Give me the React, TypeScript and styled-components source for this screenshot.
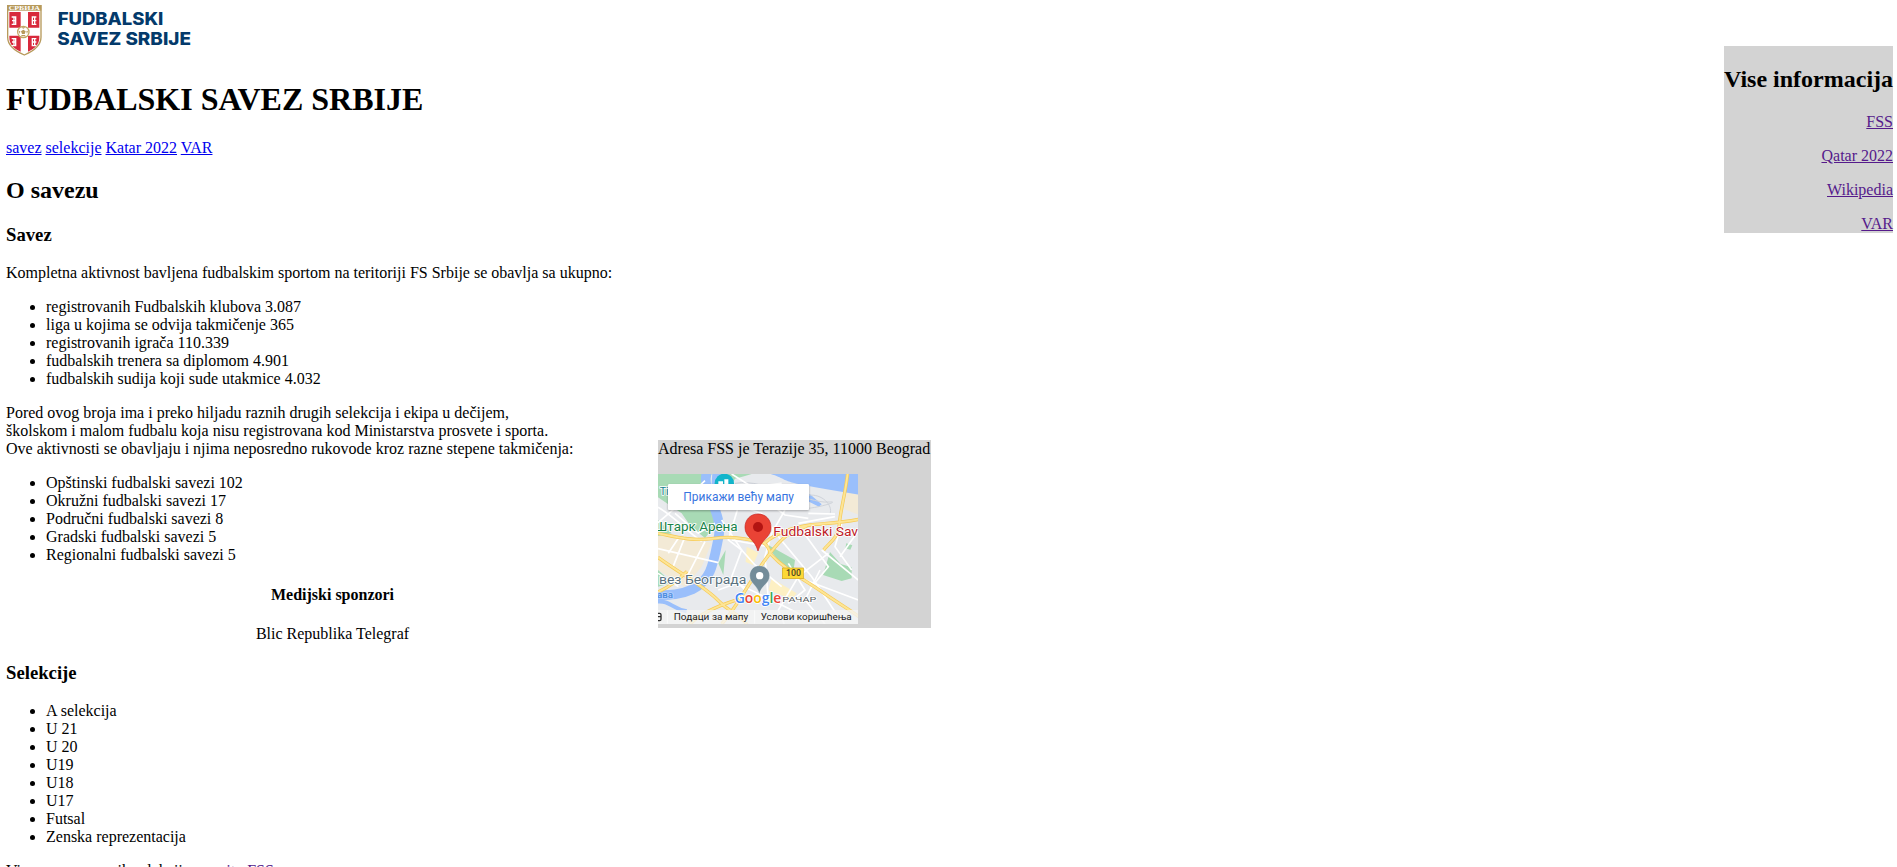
import React from "react";
import styled, { createGlobalStyle } from "styled-components";

const GlobalStyle = createGlobalStyle`
  html, body { margin: 0; height: 100%; overflow: hidden; background: #fff; }
  body {
    font-family: "Liberation Serif", "Times New Roman", serif;
    font-size: 16px;
    line-height: 18px;
    color: #000;
  }
`;

const Page = styled.div`
  display: flex;
  align-items: flex-start;
  height: 867px;
  padding: 5px 4px 0 6px;
  box-sizing: border-box;
  overflow: hidden;
`;

const Content = styled.main`
  width: 653px;
  margin-right: -1px;
  flex: none;
`;

const LogoRow = styled.header`
  height: 55px;
`;

const Logo = styled.svg`
  display: block;
`;

const Title = styled.h1`
  margin: 21px 0;
  font-size: 32px;
  line-height: 37px;
`;

const SectionTitle = styled.h2`
  margin: 19.92px 0;
  font-size: 24px;
  line-height: 27px;
`;

const SubTitle = styled.h3`
  margin: 18.72px 0;
  font-size: 18.72px;
  line-height: 21px;
`;

const Sponsors = styled.section`
  text-align: center;
`;

const SponsorsTitle = styled.h4`
  margin: 22.28px 0 21.28px;
  font-size: 16px;
`;

const Text = styled.p`
  margin: 16px 0;
`;

const List = styled.ul`
  margin: 16px 0;
  padding-left: 40px;
`;

const Link = styled.a<{ $visited?: boolean }>`
  color: ${(p) => (p.$visited ? "#551a8b" : "#0000ee")};
  text-decoration: underline;
`;

const Address = styled.aside`
  flex: none;
  width: 273px;
  height: 188px;
  margin-top: 435px;
  background: lightgray;
  white-space: nowrap;
`;

const AddressText = styled.p`
  margin: 0 0 16px;
`;

const MapView = styled.svg`
  display: block;
  overflow: hidden;
`;

const MoreInfo = styled.aside`
  flex: none;
  width: 169px;
  height: 187px;
  margin: 41px 0 0 auto;
  background: lightgray;
  text-align: right;
  display: flow-root;
  white-space: nowrap;
`;

const nav = ["savez", "selekcije", "Katar 2022", "VAR"];
const stats = [
  "registrovanih Fudbalskih klubova 3.087",
  "liga u kojima se odvija takmičenje 365",
  "registrovanih igrača 110.339",
  "fudbalskih trenera sa diplomom 4.901",
  "fudbalskih sudija koji sude utakmice 4.032",
];
const unions = [
  "Opštinski fudbalski savezi 102",
  "Okružni fudbalski savezi 17",
  "Područni fudbalski savezi 8",
  "Gradski fudbalski savezi 5",
  "Regionalni fudbalski savezi 5",
];
const teams = ["A selekcija", "U 21", "U 20", "U19", "U18", "U17", "Futsal", "Zenska reprezentacija"];
const more = ["FSS", "Qatar 2022", "Wikipedia", "VAR"];

const Items = ({ items }: { items: string[] }) => (
  <List>
    {items.map((t) => (
      <li key={t}>{t}</li>
    ))}
  </List>
);

const BrandLogo = () => (
  <Logo width="190" height="52" viewBox="18 15 570 156">
    <path d="M23 17H123V112C123 140 97 155 73 165C49 155 23 140 23 112Z" fill="#fff" stroke="#b79a5b" strokeWidth="4" />
    <rect x="22" y="15" width="102" height="17" fill="#b79a5b" />
    <text x="26" y="30" fontFamily="Liberation Serif" fontWeight="700" fontSize="20" fill="#fff" textLength="94" lengthAdjust="spacingAndGlyphs">СРБИЈА</text>
    <path d="M28 36H62V83H28ZM84 36H118V83H84ZM28 107H62V155C42 146 28 135 28 112ZM84 107H118V112C118 135 104 146 84 155Z" fill="#d8293c" />
    <g fill="none" stroke="#fff" strokeWidth="4">
      <path d="M35 51H47V73H35M36 62H46M42 52V72M109 51H97V73H109M109 62H98M104 52V72" />
      <path d="M35 116H47V137H35M36 126H46M42 117V136M109 116H97V137H109M109 126H98M104 117V136" />
    </g>
    <circle cx="70" cy="96" r="19" fill="#c4a765" />
    <circle cx="70" cy="96" r="15" fill="#fff" />
    <path d="M70 89l7 5-3 8h-8l-3-8zM63 82h14l-7 4zM56 92l5 2-2 8zM84 92l-5 2 2 8zM63 109l2-4h10l2 4z" fill="#b79a5b" />
    <g fontFamily="Inter, sans-serif" fontWeight="800" fontSize="52" fill="#043a6b">
      <text x="173" y="75" textLength="317" lengthAdjust="spacingAndGlyphs">FUDBALSKI</text>
      <text x="172" y="135" textLength="401" lengthAdjust="spacingAndGlyphs">SAVEZ SRBIJE</text>
    </g>
  </Logo>
);

const majorRoads = [
  "M9 190C60 200 110 214 170 206S250 203 330 218",
  "M330 218C370 184 430 170 465 165S550 160 612 148",
  "M9 262C90 320 150 350 190 392S250 425 280 470",
  "M200 462C250 408 290 320 345 250S410 190 455 168",
  "M345 250C390 300 450 330 500 365S570 410 612 440",
  "M578 10C570 80 556 120 553 163S520 220 506 240",
  "M9 366C40 352 70 330 96 304",
  "M306 208C330 216 342 232 346 250",
  "M100 470C120 440 180 410 250 388",
];
const minorRoads = [
  "M9 112C60 140 90 180 140 214", "M9 158L84 94L150 32", "M60 130L130 190L180 160",
  "M40 250L70 205M90 200L52 296M150 215L96 320M9 236L190 278M9 310L70 350",
  "M200 150L260 240L300 285L380 350", "M205 92L320 130L374 205L470 320L560 455",
  "M250 110L220 210L260 240L230 320L270 360", "M390 120L350 190L330 260L340 390",
  "M440 180L520 290L470 350M520 250L430 320L370 420L390 468",
  "M500 240L610 330M560 160L540 230L590 300M612 180L555 260",
  "M460 130L540 132M430 160L540 140M330 90L390 135L460 145",
  "M230 210L340 230M190 360L245 340L350 390L450 440M400 280L450 360L400 400",
  "M450 330L610 390M495 300L450 390L510 462M230 12L290 50L380 40",
];

const MapLabel = styled.text.attrs({ lengthAdjust: "spacingAndGlyphs" })`
  font-family: Roboto, sans-serif;
`;

const OfficeMap = () => (
  <MapView width="200" height="150" viewBox="9 12 600 450">
    <defs>
      <filter id="cardShadow" x="-5%" y="-20%" width="110%" height="150%">
        <feDropShadow dx="0" dy="3" stdDeviation="3" floodOpacity="0.3" />
      </filter>
    </defs>
    <rect x="9" y="12" width="600" height="450" fill="#e8eaed" />
    <path d="M9 196L170 218L140 290L90 350L9 300Z" fill="#f3ead6" />
    <path d="M275 230L310 248L294 285L272 276ZM350 325L425 370L410 388L340 360Z" fill="#fdf0c3" />
    <path d="M575 66L612 74V135L568 118Z" fill="#f3ead6" />
    <g fill="#a8dab5">
      <path d="M9 12H170L154 55L182 165L150 204L108 170L80 130L9 82ZM190 12L290 12L270 18L240 26L214 70ZM9 150L50 190L9 198ZM330 220L420 270L415 305L385 292ZM525 246L557 282L590 292V325L560 333L504 315ZM9 300L52 338L9 350ZM574 220l18 6-6 13-15-4ZM190 280L212 240L205 315Z" />
    </g>
    <g fill="none" stroke="#9abffb">
      <path d="M155 8C138 65 208 130 190 205C175 280 169 330 112 358C70 377 35 375 5 376" strokeWidth="29" />
      <path d="M5 395C45 390 50 416 95 424" strokeWidth="12" />
    </g>
    <path d="M340 10H612V74C550 64 490 54 435 43S385 22 340 10ZM464 72L500 103L492 110L456 92Z" fill="#9abffb" />
    <path d="M172 8L202 8L168 70Z" fill="#9abffb" />
    <g fill="none" stroke="#cfd3da" strokeWidth="3">
      <path d="M395 80C450 74 480 100 524 96S440 130 404 112M460 76C500 70 535 105 525 132M240 40C290 30 340 52 390 70" />
    </g>
    <g fill="none" stroke="#fff" strokeWidth="5">{minorRoads.map((d) => <path key={d} d={d} />)}</g>
    <g fill="none" stroke="#f6ca55" strokeWidth="10">{majorRoads.map((d) => <path key={d} d={d} />)}</g>
    <g fill="none" stroke="#fde596" strokeWidth="6">{majorRoads.map((d) => <path key={d} d={d} />)}</g>

    <g stroke="#fff" strokeWidth="5" paintOrder="stroke" strokeLinejoin="round">
      <MapLabel x="14" y="76" fontSize="32" fill="#148290">Ti</MapLabel>
      <MapLabel x="-1" y="182" fontSize="36" fill="#188248" textLength="249">Штарк Арена</MapLabel>
      <MapLabel x="355" y="199" fontSize="36" fill="#bd2027" textLength="254">Fudbalski Sav</MapLabel>
      <MapLabel x="12" y="343" fontSize="36" fill="#59717e" textLength="262">вез Београда</MapLabel>
      <MapLabel x="6" y="383" fontSize="25" fontWeight="500" fill="#4c8bdd" stroke="#b7d2fd" textLength="48">ава</MapLabel>
      <MapLabel x="382" y="395" fontSize="24" fill="#555b60" textLength="102">РАЧАР</MapLabel>
    </g>

    <circle cx="208" cy="40" r="29" fill="#12b5cb" />
    <path d="M190 34h14v10h-14zM208 28h12v15h-12z" fill="#fff" />
    <path d="M309 132C285 132 270 150 270 172C270 203 300 207 309 243C319 207 348 203 348 172C348 150 333 132 309 132Z" fill="#ea4335" stroke="#c5221f" strokeWidth="2" />
    <circle cx="309" cy="171" r="15" fill="#b31412" />
    <path d="M313 287C295 287 284 301 284 317C284 341 308 345 313 373C319 345 344 341 344 317C344 301 331 287 313 287Z" fill="#738c99" stroke="#fff" strokeWidth="1" />
    <circle cx="314" cy="317" r="11" fill="#fff" />
    <rect x="382" y="294" width="63" height="32" fill="#fdd835" stroke="#cfa51b" strokeWidth="2" />
    <MapLabel x="393" y="319" fontWeight="500" fontSize="25" fill="#4b4428" textLength="45">100</MapLabel>

    <g filter="url(#cardShadow)">
      <rect x="39" y="42" width="423" height="78" rx="4" fill="#fff" />
    </g>
    <MapLabel x="85" y="92" fontSize="36" fill="#3774e0" textLength="332">Прикажи већу мапу</MapLabel>

    <text x="239" y="398" fontFamily="Open Sans, sans-serif" fontWeight="600" fontSize="45" stroke="#fff" strokeWidth="5" paintOrder="stroke" textLength="140" lengthAdjust="spacingAndGlyphs">
      <tspan fill="#4285f4">G</tspan><tspan fill="#ea4335">o</tspan><tspan fill="#fbbc04">o</tspan><tspan fill="#4285f4">g</tspan><tspan fill="#34a853">l</tspan><tspan fill="#ea4335">e</tspan>
    </text>

    <rect x="9" y="420" width="600" height="42" fill="#f5f5f5" fillOpacity="0.78" />
    <path d="M9 430H14Q18 430 18 434V448Q18 452 14 452H9M9 440H18" fill="none" stroke="#303030" strokeWidth="4" />
    <path d="M37 421V461M299 421V461" stroke="#fff" strokeWidth="2" />
    <MapLabel x="56" y="449" fontSize="28" fill="#1b1b1b" textLength="224">Подаци за мапу</MapLabel>
    <MapLabel x="317" y="449" fontSize="28" fill="#1b1b1b" textLength="273">Услови коришћења</MapLabel>
  </MapView>
);

export default function App() {
  return (
    <>
      <GlobalStyle />
      <Page>
        <Content>
          <LogoRow><BrandLogo /></LogoRow>
          <Title>FUDBALSKI SAVEZ SRBIJE</Title>
          <nav>
            {nav.map((t) => (
              <React.Fragment key={t}><Link>{t}</Link>{" "}</React.Fragment>
            ))}
          </nav>
          <SectionTitle>O savezu</SectionTitle>
          <SubTitle>Savez</SubTitle>
          <Text>Kompletna aktivnost bavljena fudbalskim sportom na teritoriji FS Srbije se obavlja sa ukupno:</Text>
          <Items items={stats} />
          <Text>
            Pored ovog broja ima i preko hiljadu raznih drugih selekcija i ekipa u dečijem,<br />
            školskom i malom fudbalu koja nisu registrovana kod Ministarstva prosvete i sporta.<br />
            Ove aktivnosti se obavljaju i njima neposredno rukovode kroz razne stepene takmičenja:
          </Text>
          <Items items={unions} />
          <Sponsors>
            <SponsorsTitle>Medijski sponzori</SponsorsTitle>
            <Text>Blic Republika Telegraf</Text>
          </Sponsors>
          <SubTitle>Selekcije</SubTitle>
          <Items items={teams} />
          <Text>Vise o svemu nasih selekcija <Link $visited>na sajtu FSS</Link></Text>
        </Content>
        <Address>
          <AddressText>Adresa FSS je Terazije 35, 11000 Beograd</AddressText>
          <OfficeMap />
        </Address>
        <MoreInfo>
          <SectionTitle>Vise informacija</SectionTitle>
          {more.map((t) => (
            <Text key={t}><Link $visited>{t}</Link></Text>
          ))}
        </MoreInfo>
      </Page>
    </>
  );
}
